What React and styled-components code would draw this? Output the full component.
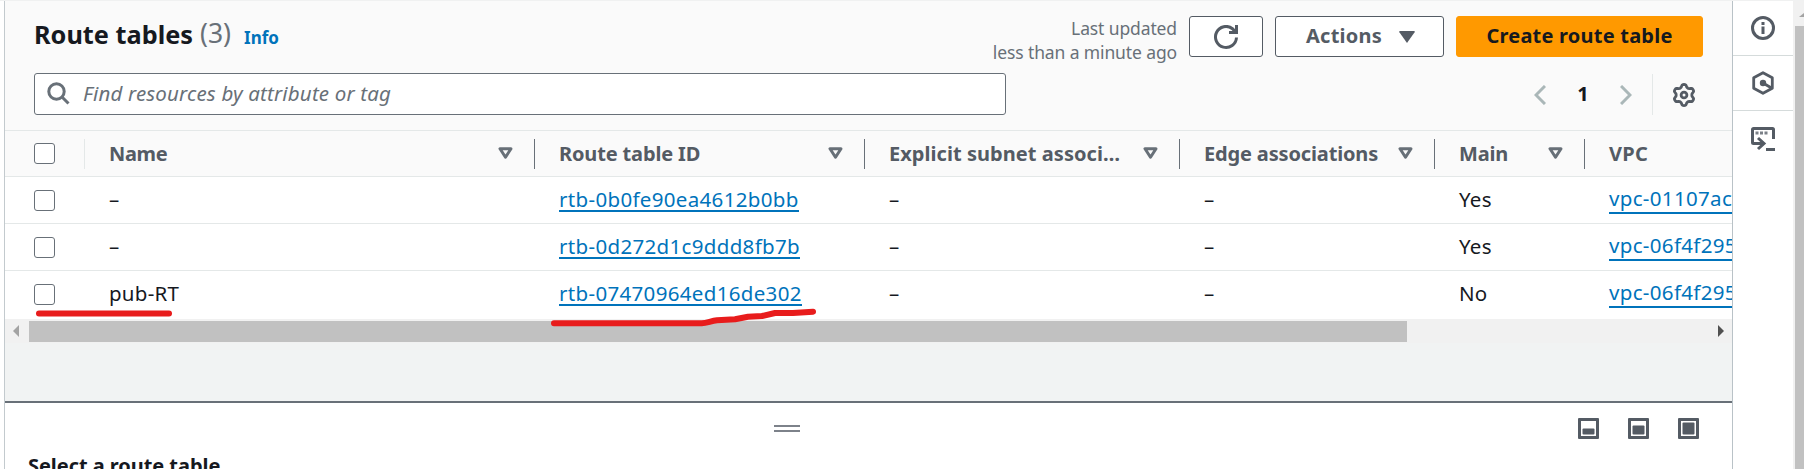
import React from "react";
import styled, { createGlobalStyle } from "styled-components";

const Global = createGlobalStyle`
  * { box-sizing: border-box; }
  body { margin: 0; background: #fff; overflow: hidden; }
`;

const Page = styled.div`
  position: relative;
  display: grid;
  grid-template-columns: 4px 1729px 60px 11px;
  height: 469px;
  overflow: hidden;
  font-family: "Noto Sans", "Open Sans", sans-serif;
  font-size: 20px;
  color: #16191f;
  border-top: 1px solid #f0f1f1;
`;

const Main = styled.main`
  grid-column: 2;
  display: flex;
  flex-direction: column;
  min-width: 0;
  border-left: 1px solid #c3cace;
  border-right: 1px solid #b9c2c7;
  background: #f1f3f3;
  overflow: hidden;
`;

const Header = styled.header`
  height: 130px;
  flex: none;
  background: #fafafa;
  border-bottom: 1px solid #e4e8e8;
  padding: 15px 29px 0 29px;
`;

const TitleRow = styled.div`
  display: flex;
  align-items: flex-start;
  height: 57px;
`;

const Title = styled.h1`
  margin: 1px 0 0;
  font-size: 25.3px;
  line-height: 34px;
  font-weight: 700;
  white-space: nowrap;
`;

const Count = styled.span`
  margin: 0 0 0 7px;
  font-size: 26.5px;
  line-height: 34px;
  color: #687078;
`;

const InfoLink = styled.a`
  margin: 9px 0 0 13px;
  font-size: 17px;
  line-height: 26px;
  font-weight: 700;
  color: #0073bb;
`;

const Actions = styled.div`
  margin-left: auto;
  display: flex;
  align-items: flex-start;
`;

const Updated = styled.div`
  margin: 0 12px 0 0;
  text-align: right;
  font-size: 17.5px;
  line-height: 24px;
  color: #687078;
  letter-spacing: -0.12px;
`;

const Button = styled.button`
  display: flex;
  align-items: center;
  justify-content: center;
  gap: 17px;
  width: ${(p) => p.$width}px;
  height: 41px;
  margin: 0 0 0 ${(p) => p.$gap || 0}px;
  padding: 0 0 2px ${(p) => p.$shift || 0}px;
  font: 700 20px "Noto Sans", sans-serif;
  letter-spacing: 0.22px;
  border-radius: 3px;
  border: 1px solid ${(p) => (p.$primary ? "#ff9900" : "#545b64")};
  background: ${(p) => (p.$primary ? "#ff9900" : "#fff")};
  color: ${(p) => (p.$primary ? "#16191f" : "#545b64")};

  svg {
    margin-top: 3px;
  }
`;

const ToolRow = styled.div`
  display: flex;
  align-items: center;
  height: 42px;
`;

const Search = styled.div`
  display: flex;
  align-items: center;
  width: 972px;
  height: 42px;
  padding: 0 0 1px 12px;
  gap: 13px;
  border: 1px solid #687078;
  border-radius: 3px;
  background: #fff;
  font-size: 20.5px;
  font-style: italic;
  letter-spacing: 0.17px;
  color: #687078;

  span {
    margin-top: -2px;
  }
`;

const Pager = styled.div`
  display: flex;
  align-items: center;
  margin-left: auto;
  height: 42px;
  padding-right: 7px;

  svg {
    margin-top: 2px;
  }
`;

const PageNumber = styled.span`
  width: 12px;
  margin: -2px 31px 0;
  text-align: center;
  font-weight: 700;
`;

const Divider = styled.span`
  width: 1px;
  height: 41px;
  margin: 0 19px 0 20px;
  background: #e4e8e8;
`;

const Row = styled.div`
  display: grid;
  grid-template-columns: 80px 450px 330px 315px 255px 150px 1fr;
  align-items: center;
  flex: none;
  height: ${(p) => p.$height}px;
  padding-bottom: ${(p) => (p.$last ? 2 : 0)}px;
  background: ${(p) => (p.$head ? "#fafafa" : "#fff")};
  border-bottom: ${(p) => (p.$last ? 0 : 1)}px solid #e4e8e8;
  font-weight: ${(p) => (p.$head ? 700 : 400)};
  font-size: ${(p) => (p.$head ? 20 : 20.5)}px;
  letter-spacing: ${(p) => (p.$head ? 0 : 0.25)}px;
  color: ${(p) => (p.$head ? "#545b64" : "#16191f")};
`;

const CheckCell = styled.div`
  display: flex;
  align-items: center;
  height: 30px;
  padding-left: 29px;
  border-right: ${(p) => (p.$line ? 1 : 0)}px solid #e4e8e8;
`;

const Checkbox = styled.span`
  width: 21px;
  height: 21px;
  border: 1px solid #687078;
  border-radius: 3px;
  background: #fff;
`;

const HeadCell = styled.div`
  display: flex;
  align-items: center;
  justify-content: space-between;
  height: 30px;
  padding: 0 21px 0 24px;
  white-space: nowrap;
  letter-spacing: ${(p) => p.$track}px;
  border-right: ${(p) => (p.$line ? 1 : 0)}px solid #687078;
`;

const Cell = styled.div`
  display: flex;
  align-items: center;
  height: 30px;
  padding: 0 0 2px 24px;
  white-space: nowrap;
`;

const IdLink = styled.a`
  color: #0073bb;
  flex: ${(p) => (p.$fill ? 1 : "none")};
  line-height: 20px;
  height: ${(p) => (p.$fill ? 26 : 23)}px;
  margin-top: ${(p) => (p.$fill ? 4 : 2)}px;
  letter-spacing: 0.33px;
  border-bottom: 2px solid #0073bb;
`;

const HScroll = styled.div`
  display: flex;
  align-items: center;
  flex: none;
  height: 24px;
  padding: 0 8px;
  background: #f1f1f1;
`;

const HThumb = styled.div`
  width: 1378px;
  height: 21px;
  margin: 0 auto 0 10px;
  background: #c1c1c1;
`;

const Split = styled.section`
  flex: none;
  height: 80px;
  margin-top: 58px;
  border-top: 2px solid #687078;
  background: #fff;
  overflow: hidden;
`;

const SplitTools = styled.div`
  display: flex;
  align-items: flex-start;
  height: 49px;
  padding: 15px 33px 0 769px;
`;

const SplitIcons = styled.div`
  display: flex;
  gap: 29px;
  margin-left: auto;
`;

const Grip = styled.div`
  width: 26px;
  height: 7px;
  margin-top: 7px;
  border-top: 2px solid #7d828a;
  border-bottom: 2px solid #7d828a;
`;

const SplitTitle = styled.h2`
  margin: 0 0 0 23px;
  font-size: 20px;
  line-height: 27px;
  font-weight: 700;
  letter-spacing: -0.05px;
  white-space: nowrap;
`;

const Rail = styled.aside`
  background: #fff;
`;

const RailItem = styled.div`
  display: flex;
  align-items: center;
  justify-content: center;
  height: 55px;
  border-bottom: ${(p) => (p.$last ? 0 : 1)}px solid #d5dbdb;
`;

const VScroll = styled.div`
  display: flex;
  flex-direction: column;
  align-items: flex-end;
  padding-top: 12px;
  background: #f1f1f1;
  overflow: hidden;
`;

const VThumb = styled.div`
  flex: 1;
  width: 9px;
  margin-top: 9px;
  background: #c1c1c1;
`;

const Marks = styled.svg`
  position: absolute;
  left: 0;
  top: 268px;
`;

const SortIcon = () => (
  <svg width="15" height="13" viewBox="0 0 15 13" fill="none" stroke="#687078" strokeWidth="3" strokeLinejoin="round">
    <path d="M2 1.700h11l-5.500 8.500z" />
  </svg>
);

const LayoutIcon = ({ top }) => (
  <svg width="21" height="21" viewBox="0 0 21 21" fill="#545b64">
    <path fillRule="evenodd" d="M1 0h19a1 1 0 0 1 1 1v19a1 1 0 0 1-1 1H1a1 1 0 0 1-1-1V1a1 1 0 0 1 1-1zM3 3v15h15V3z" />
    <rect x="4.500" y={top} width="12" height={16.5 - top} rx="1" />
  </svg>
);

// Six-lobed outline of the gear, lobes at the top and bottom.
const gearOutline =
  "M" +
  Array.from({ length: 72 }, (_, i) => {
    const a = (i * Math.PI) / 36;
    const r = 9.2 + 1.4 * Math.tanh(1.8 * Math.cos(6 * a));
    return `${(12 + r * Math.sin(a)).toFixed(2)} ${(12 - r * Math.cos(a)).toFixed(2)}`;
  }).join("L") +
  "Z";

const GearIcon = () => (
  <svg width="24" height="24" viewBox="0 0 24 24" fill="none" stroke="#545b64" strokeWidth="2.800" strokeLinejoin="round">
    <path d={gearOutline} />
    <circle cx="12" cy="12" r="2.900" />
  </svg>
);

const InfoIcon = () => (
  <svg width="24" height="24" viewBox="0 0 24 24" fill="none" stroke="#545b64" strokeWidth="3">
    <circle cx="12" cy="12" r="10.500" />
    <path d="M12 6v3M12 10.500v7.500" />
  </svg>
);

const HexIcon = () => (
  <svg width="24" height="24" viewBox="0 0 24 24" fill="none" stroke="#545b64" strokeWidth="2.800" strokeLinejoin="round">
    <path d="M12 1.700l9.300 5v10.600l-9.300 5-9.300-5V6.700z" />
    <circle cx="12" cy="12" r="3.200" fill="#545b64" stroke="none" />
    <path d="M12 12l8.500 5" />
  </svg>
);

const ShellIcon = () => (
  <svg width="24" height="24" viewBox="0 0 24 24" fill="none" stroke="#545b64" strokeWidth="3">
    <path d="M22.500 12V2.500a1 1 0 0 0-1-1h-19a1 1 0 0 0-1 1v13a1 1 0 0 0 1 1H12" />
    <path d="M7 11l6 5.500L7 22" />
    <path d="M15 22.500h9" />
    <path d="M4.500 6h3M9 6h3M13.500 6h3" stroke="#7b8087" />
  </svg>
);

const columns = [
  ["Name", -0.35],
  ["Route table ID", -0.15],
  ["Explicit subnet associ…", 0.05],
  ["Edge associations", -0.15],
  ["Main", -0.2],
  ["VPC", 0.3],
];

const rows = [
  ["–", "rtb-0b0fe90ea4612b0bb", "Yes", "vpc-01107ac"],
  ["–", "rtb-0d272d1c9ddd8fb7b", "Yes", "vpc-06f4f295"],
  ["pub-RT", "rtb-07470964ed16de302", "No", "vpc-06f4f295"],
];

export default function App() {
  return (
    <Page>
      <Global />
      <Main>
        <Header>
          <TitleRow>
            <Title>Route tables</Title>
            <Count>(3)</Count>
            <InfoLink>Info</InfoLink>
            <Actions>
              <Updated>Last updated<br />less than a minute ago</Updated>
              <Button $width={74}>
                <svg width="24" height="24" viewBox="0 0 24 24" fill="none" stroke="#545b64" strokeWidth="3">
                  <path d="M22.500 12.500A10.500 10.500 0 1 1 18.500 3.700L22 7.500M22.500 0v7.500H15" />
                </svg>
              </Button>
              <Button $width={169} $gap={12} $shift={2}>
                Actions
                <svg width="16" height="12" viewBox="0 0 16 12"><path d="M1 0h14a.8.8 0 0 1 .6 1.200L8 12 .4 1.200A.8.8 0 0 1 1 0z" fill="#545b64" /></svg>
              </Button>
              <Button $width={247} $gap={12} $primary>Create route table</Button>
            </Actions>
          </TitleRow>
          <ToolRow>
            <Search>
              <svg width="23" height="23" viewBox="0 0 23 23" fill="none" stroke="#687078" strokeWidth="3">
                <circle cx="9.500" cy="9.500" r="7.700" /><path d="M15 15l6.500 6.500" />
              </svg>
              <span>Find resources by attribute or tag</span>
            </Search>
            <Pager>
              <svg width="12" height="20" viewBox="0 0 12 20" fill="none" stroke="#aab7b8" strokeWidth="3"><path d="M11 1L2 10l9 9" /></svg>
              <PageNumber>1</PageNumber>
              <svg width="12" height="20" viewBox="0 0 12 20" fill="none" stroke="#aab7b8" strokeWidth="3"><path d="M1 1l9 9-9 9" /></svg>
              <Divider />
              <GearIcon />
            </Pager>
          </ToolRow>
        </Header>
        <Row $head $height={46}>
          <CheckCell $line><Checkbox /></CheckCell>
          {columns.map(([name, track], i) => (
            <HeadCell key={name} $track={track} $line={i < 5}>{name}{i < 5 && <SortIcon />}</HeadCell>
          ))}
        </Row>
        {rows.map(([name, id, main, vpc], i) => (
          <Row key={id} $height={i === 2 ? 48 : 47} $last={i === 2}>
            <CheckCell><Checkbox /></CheckCell>
            <Cell>{name}</Cell>
            <Cell><IdLink>{id}</IdLink></Cell>
            <Cell>–</Cell>
            <Cell>–</Cell>
            <Cell>{main}</Cell>
            <Cell><IdLink $fill>{vpc}</IdLink></Cell>
          </Row>
        ))}
        <HScroll>
          <svg width="6" height="12" viewBox="0 0 6 12"><path d="M6 0v12L0 6z" fill="#a3a3a3" /></svg>
          <HThumb />
          <svg width="6" height="12" viewBox="0 0 6 12"><path d="M0 0v12l6-6z" fill="#505050" /></svg>
        </HScroll>
        <Split>
          <SplitTools>
            <Grip />
            <SplitIcons><LayoutIcon top={10.5} /><LayoutIcon top={7.5} /><LayoutIcon top={4.5} /></SplitIcons>
          </SplitTools>
          <SplitTitle>Select a route table</SplitTitle>
        </Split>
      </Main>
      <Rail>
        <RailItem><InfoIcon /></RailItem>
        <RailItem><HexIcon /></RailItem>
        <RailItem $last><ShellIcon /></RailItem>
      </Rail>
      <VScroll>
        <svg width="5" height="4" viewBox="0 0 5 4"><path d="M5 0v4H0z" fill="#a3a3a3" /></svg>
        <VThumb />
      </VScroll>
      <Marks width="830" height="70" viewBox="0 269 830 70" fill="none" stroke="#e81c1c" strokeWidth="6" strokeLinecap="round" strokeLinejoin="round">
        <path d="M39 313.400H169" />
        <path d="M554 323.300H701.700C707 323 711 321 717 320.300L735 319.200L748 316.800L762 316L775 313L793 313L813 311.700" />
      </Marks>
    </Page>
  );
}
